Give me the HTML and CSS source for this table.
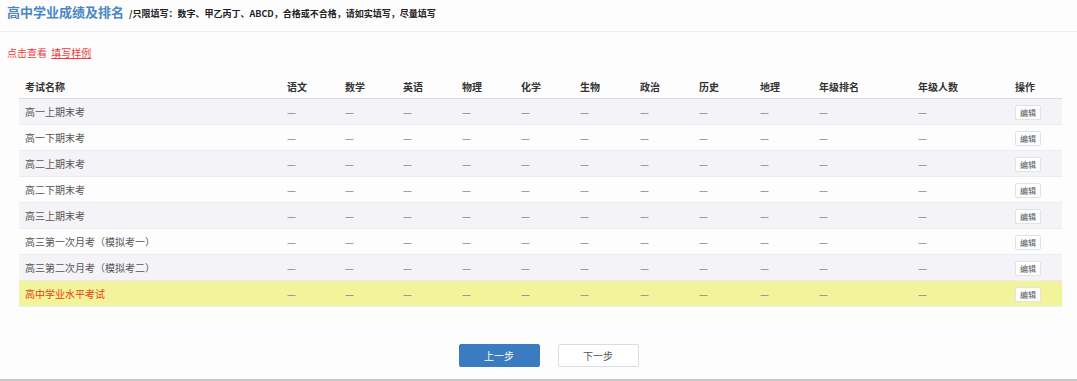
FILE: index.html
```html
<!DOCTYPE html>
<html lang="zh-CN">
<head>
    <meta charset="UTF-8">
    <title>高中学业成绩及排名</title>
    <link rel="stylesheet" href="styles.css">
</head>
<body>
    <div class="page">
        <div class="title-bar">
            <span class="title">高中学业成绩及排名</span>
            <span class="hint">/只限填写：数字、甲乙丙丁、ABCD，合格或不合格，请如实填写，尽量填写</span>
        </div>

        <div class="sample">点击查看 <a href="#">填写样例</a></div>

        <table class="scores">
            <colgroup>
                <col style="width: 262px">
                <col style="width: 58px">
                <col style="width: 58px">
                <col style="width: 59px">
                <col style="width: 59px">
                <col style="width: 59px">
                <col style="width: 60px">
                <col style="width: 59px">
                <col style="width: 61px">
                <col style="width: 59px">
                <col style="width: 99px">
                <col style="width: 97px">
                <col style="width: 53px">
            </colgroup>
            <thead>
                <tr>
                    <th>考试名称</th><th>语文</th><th>数学</th><th>英语</th><th>物理</th><th>化学</th><th>生物</th><th>政治</th><th>历史</th><th>地理</th><th>年级排名</th><th>年级人数</th><th>操作</th>
                </tr>
            </thead>
            <tbody id="rows"></tbody>
        </table>

        <div class="steps">
            <button class="btn btn-primary">上一步</button>
            <button class="btn">下一步</button>
        </div>
    </div>

    <script>
        // exam list, last one is highlighted
        const exams = [
            '高一上期末考',
            '高一下期末考',
            '高二上期末考',
            '高二下期末考',
            '高三上期末考',
            '高三第一次月考（模拟考一）',
            '高三第二次月考（模拟考二）',
            '高中学业水平考试'
        ];

        const tbody = document.getElementById('rows');
        exams.forEach((name, i) => {
            const tr = document.createElement('tr');
            if (i === exams.length - 1) tr.className = 'current';
            let cells = `<td>${name}</td>`;
            for (let j = 0; j < 11; j++) cells += '<td class="dash">—</td>';
            cells += '<td><span class="edit">编辑</span></td>';
            tr.innerHTML = cells;
            tbody.appendChild(tr);
        });
    </script>
</body>
</html>
```

FILE: styles.css
```css
body {
    margin: 0;
    background-color: #fdfdfe;
    font-family: "Noto Sans CJK SC", "Liberation Sans", sans-serif;
    color: #444;
}
.page {
    height: 381px;
    box-sizing: border-box;
    border-bottom: 2px solid #c8c8cc;
}
.title-bar {
    height: 32px;
    padding: 2px 7px 0;
    box-sizing: border-box;
    border-bottom: 1px solid #eeedf4;
    display: flex;
    align-items: baseline;
    gap: 5px;
}
.title {
    color: #4a87c4;
    font-size: 13px;
    font-weight: bold;
    line-height: 20px;
}
.hint {
    color: #222;
    font-size: 9px;
    font-weight: bold;
}
.sample {
    margin: 14px 0 0 7px;
    font-size: 10px;
    color: #f03a3a;
    line-height: 14px;
}
.sample a {
    color: #f03a3a;
    text-decoration: underline;
    margin-left: 2px;
}
.scores {
    margin: 14px 0 0 19px;
    width: 1043px;
    border-collapse: collapse;
    table-layout: fixed;
    font-size: 10px;
}
.scores th {
    text-align: left;
    font-weight: bold;
    color: #333;
    height: 24px;
    padding: 0 6px;
    border-bottom: 1px solid #dcdce2;
}
.scores td {
    height: 25px;
    padding: 0 6px;
    border-bottom: 1px solid #ebebf0;
    color: #555;
    white-space: nowrap;
}
.scores tbody tr:nth-child(odd) {
    background-color: #f4f3f7;
}
.scores tbody tr.current {
    background-color: #f2f49c;
}
.scores tr.current td:first-child {
    color: #e8400f;
}
.scores td.dash {
    color: #888;
}
.edit {
    display: inline-block;
    padding: 1px 4px;
    font-size: 8px;
    line-height: 11px;
    color: #555;
    background-color: #fff;
    border: 1px solid #e2e2e6;
    border-radius: 2px;
}
.steps {
    margin-top: 37px;
    display: flex;
    justify-content: center;
    gap: 18px;
    padding-left: 20px;
}
.btn {
    width: 81px;
    height: 23px;
    font-family: inherit;
    font-size: 10px;
    color: #555;
    background-color: #fff;
    border: 1px solid #dcdce0;
    border-radius: 2px;
    cursor: pointer;
}
.btn-primary {
    background-color: #3b7cc0;
    border-color: #3b7cc0;
    color: #fff;
}
```
